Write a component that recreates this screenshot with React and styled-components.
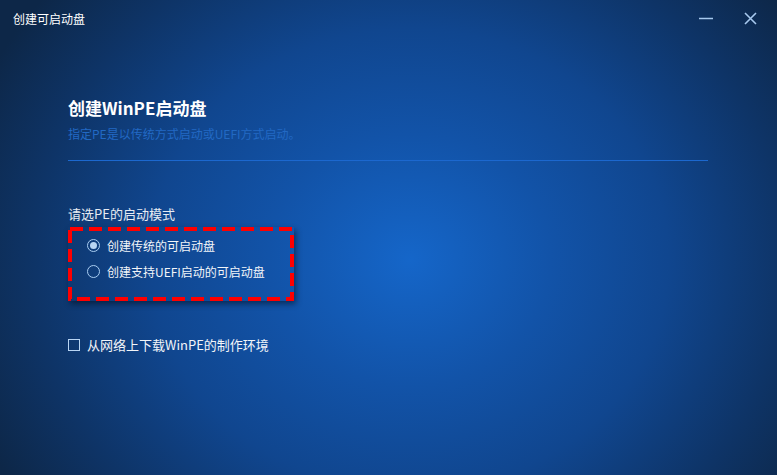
import styled, { createGlobalStyle } from 'styled-components'

const GlobalStyle = createGlobalStyle`
  html, body {
    margin: 0;
    padding: 0;
  }
  body {
    font-family: "Noto Sans CJK SC", "Noto Sans", sans-serif;
  }
`

const Window = styled.div`
  width: 777px;
  height: 475px;
  overflow: hidden;
  display: flex;
  flex-direction: column;
  background: radial-gradient(
    ellipse 470px 420px at 410px 260px,
    #1566c9 0%,
    #1253a8 30%,
    #10468f 55%,
    #0e3467 80%,
    #0d2748 100%
  );
  color: #ffffff;
`

const TitleBar = styled.div`
  height: 36px;
  display: flex;
  align-items: center;
  padding-left: 13px;
  padding-right: 12px;
`

const TitleText = styled.div`
  flex: 1;
  font-size: 12px;
  color: #ffffff;
`

const WinButton = styled.button`
  width: 30px;
  height: 30px;
  margin-left: 14px;
  border: none;
  background: transparent;
  display: flex;
  align-items: center;
  justify-content: center;
  padding: 0;
  cursor: pointer;
`

const Content = styled.div`
  padding: 60px 68px 0 68px;
  display: flex;
  flex-direction: column;
`

const Heading = styled.h1`
  margin: 0;
  font-size: 17px;
  font-weight: bold;
  line-height: 24px;
`

const Subtitle = styled.div`
  margin-top: 6px;
  font-size: 12px;
  line-height: 16px;
  color: #2269c4;
`

const Divider = styled.div`
  margin-top: 18px;
  width: 640px;
  height: 1px;
  background: #1c68cf;
`

const SectionLabel = styled.div`
  margin-top: 44px;
  font-size: 13px;
  line-height: 18px;
  color: #e6ebf2;
`

const OptionBox = styled.div`
  position: relative;
  box-sizing: border-box;
  margin-top: 4px;
  width: 226px;
  height: 74px;
  padding: 9px 0 0 19px;
  box-shadow: 2px 3px 6px rgba(0, 0, 0, 0.45);
  display: flex;
  flex-direction: column;
  gap: 7px;
`

const DashFrame = styled.svg`
  position: absolute;
  inset: 0;
  pointer-events: none;
`

const Option = styled.label`
  display: flex;
  align-items: center;
  height: 19px;
  gap: 7px;
  font-size: 12px;
  color: #f2f5f9;
`

const Radio = styled.span`
  width: 11px;
  height: 11px;
  border-radius: 50%;
  border: 1px solid #a9cdf2;
  display: flex;
  align-items: center;
  justify-content: center;
  &::after {
    content: '';
    width: 7px;
    height: 7px;
    border-radius: 50%;
    background: ${(p) => (p.checked ? '#b9d5f3' : 'transparent')};
  }
`

const CheckRow = styled.label`
  margin-top: 34px;
  display: flex;
  align-items: center;
  gap: 7px;
  font-size: 13px;
  color: #f2f5f9;
`

const Checkbox = styled.span`
  width: 10px;
  height: 10px;
  border: 1px solid #b9d5f3;
`

function App() {
  return (
    <>
      <GlobalStyle />
      <Window>
        <TitleBar>
          <TitleText>创建可启动盘</TitleText>
          <WinButton aria-label="最小化">
            <svg width="14" height="14" viewBox="0 0 14 14">
              <line x1="0" y1="7.5" x2="14" y2="7.5" stroke="#a7c9ee" strokeWidth="1.5" />
            </svg>
          </WinButton>
          <WinButton aria-label="关闭">
            <svg width="13" height="13" viewBox="0 0 13 13">
              <path d="M1 1 L12 12 M12 1 L1 12" stroke="#a7c9ee" strokeWidth="1.6" />
            </svg>
          </WinButton>
        </TitleBar>
        <Content>
          <Heading>创建WinPE启动盘</Heading>
          <Subtitle>指定PE是以传统方式启动或UEFI方式启动。</Subtitle>
          <Divider />
          <SectionLabel>请选PE的启动模式</SectionLabel>
          <OptionBox>
            <DashFrame width="226" height="74" viewBox="0 0 226 74">
              <rect
                x="2"
                y="2"
                width="222"
                height="70"
                fill="none"
                stroke="#ff0000"
                strokeWidth="4"
                strokeDasharray="13 6"
              />
            </DashFrame>
            <Option>
              <Radio checked />
              创建传统的可启动盘
            </Option>
            <Option>
              <Radio />
              创建支持UEFI启动的可启动盘
            </Option>
          </OptionBox>
          <CheckRow>
            <Checkbox />
            从网络上下载WinPE的制作环境
          </CheckRow>
        </Content>
      </Window>
    </>
  )
}

export default App
